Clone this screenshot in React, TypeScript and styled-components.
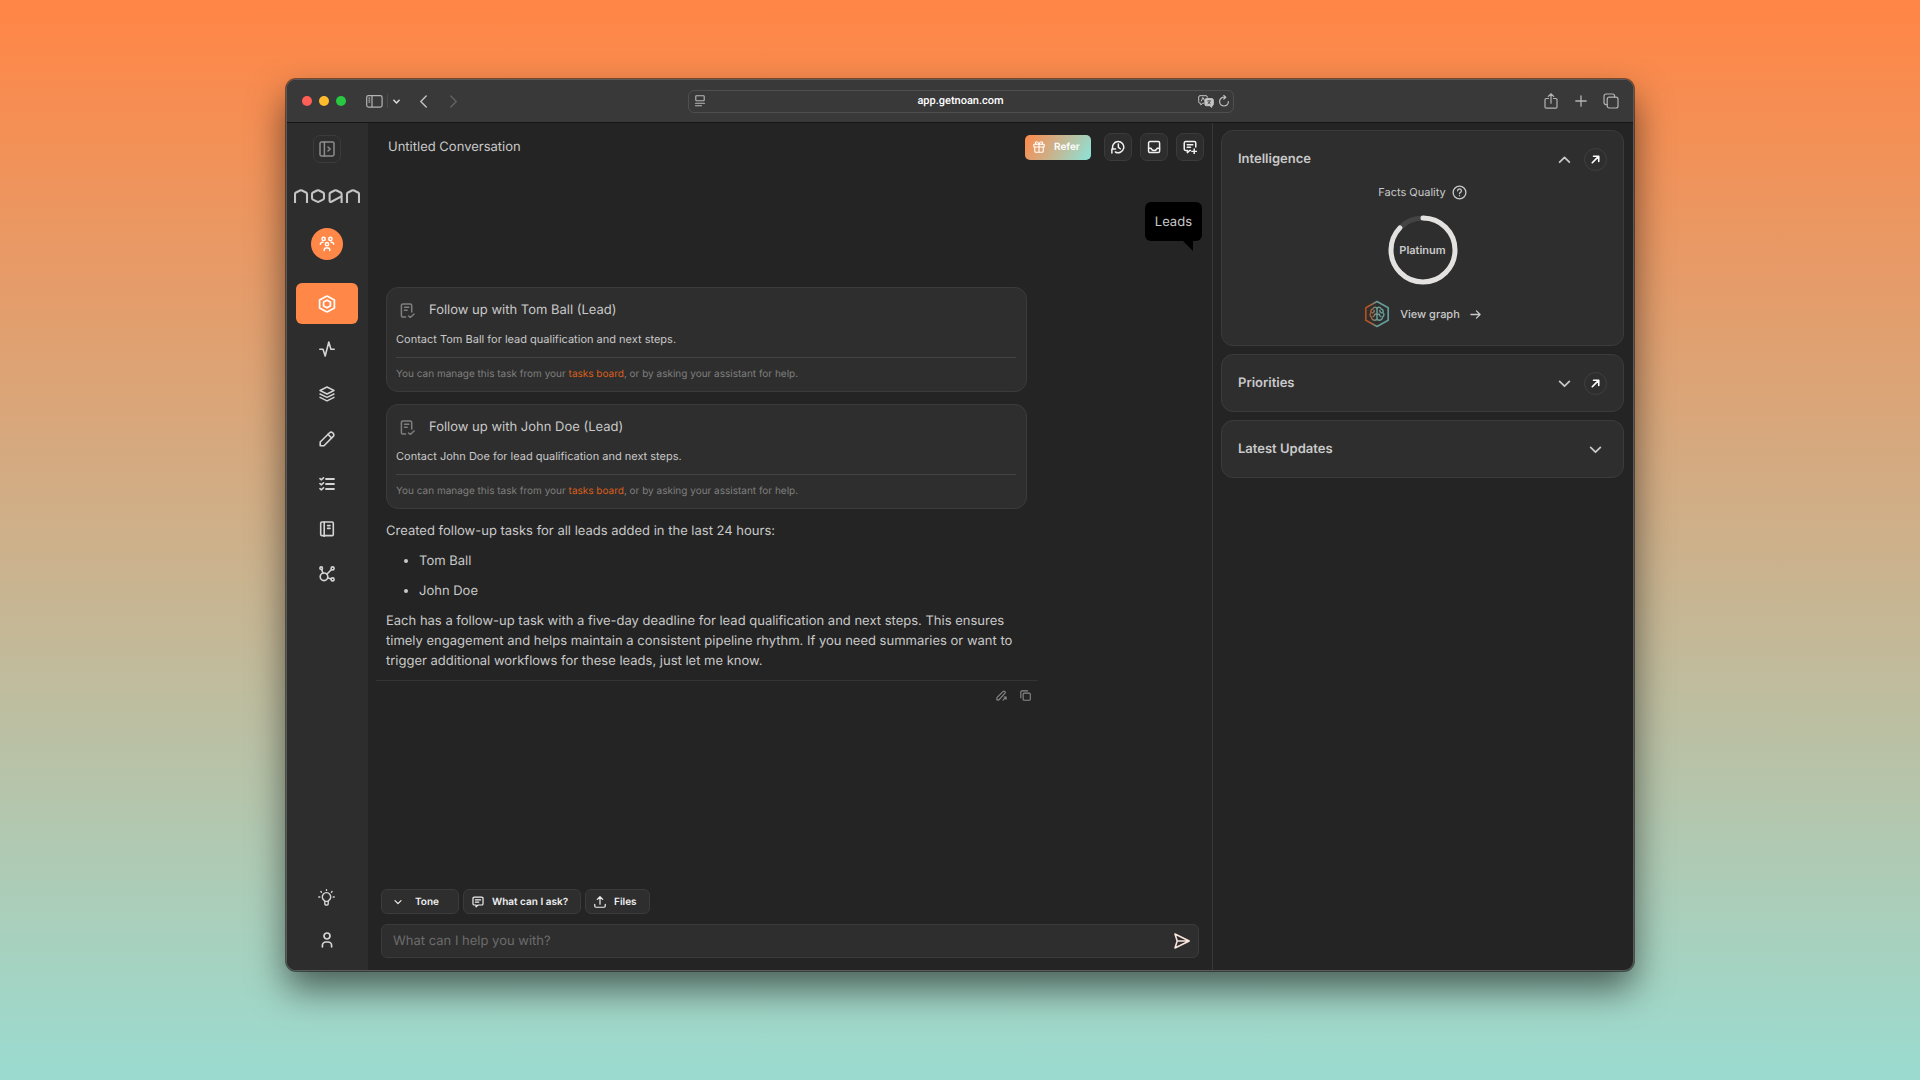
import React from "react";
import styled, { createGlobalStyle, css } from "styled-components";

const color = {
  bar: "#393939",
  side: "#2d2d2d",
  page: "#242424",
  card: "#2e2e2e",
  line: "#3b3b3b",
  text: "#c9c9c9",
  muted: "#7f7f7f",
  bright: "#f0f0f0",
  accent: "#ff8849",
  link: "#d95f1b",
};

const GlobalStyle = createGlobalStyle`
  * { box-sizing: border-box; }
  body {
    margin: 0;
    font-family: Inter, "Liberation Sans", sans-serif;
    font-size: 13px;
    line-height: 20px;
    color: ${color.text};
    text-rendering: geometricPrecision;
    -webkit-font-smoothing: antialiased;
  }
  button, input, select { font: inherit; color: inherit; text-rendering: inherit; }
  svg { display: block; flex: none; }
`;

const Desktop = styled.div`
  display: flex;
  min-height: 100vh;
  padding: 79px 286px 109px;
  background: linear-gradient(180deg, #ff8646 0%, #ff8646 1%, #9bdbcf 99%, #9bdbcf 100%);
`;

const Window = styled.div`
  flex: 1;
  min-width: 0;
  display: flex;
  flex-direction: column;
  overflow: hidden;
  border: 1px solid #5a5a5a;
  border-radius: 10px;
  background: ${color.page};
  box-shadow: 0 0 0 1px rgba(0, 0, 0, 0.45), 0 18px 36px rgba(0, 0, 0, 0.55);
`;

const bare = css`
  display: inline-flex;
  align-items: center;
  justify-content: center;
  padding: 0;
  border: 0;
  background: none;
  cursor: pointer;
`;

const PlainButton = styled.button<{ $tone?: string }>`
  ${bare}
  color: ${(p) => p.$tone ?? color.text};
`;

const TitleBar = styled.header`
  display: grid;
  grid-template-columns: 1fr minmax(0, 546px) 1fr;
  align-items: center;
  height: 43px;
  padding: 0 14px 0 15px;
  background: ${color.bar};
  border-bottom: 1px solid #151515;
`;

const BarLeft = styled.div`
  display: flex;
  align-items: center;
`;

const Lights = styled.div`
  display: flex;
  gap: 7px;
  margin-right: 20px;
`;

const Light = styled.span<{ $fill: string }>`
  width: 10px;
  height: 10px;
  border-radius: 50%;
  background: ${(p) => p.$fill};
`;

const BarSplit = styled.span`
  width: 1px;
  height: 14px;
  margin: 0 5px 0 4px;
  background: #4a4a4a;
`;

const History = styled.div`
  display: flex;
  gap: 17px;
  margin-left: 17px;
`;

const Address = styled.div`
  display: flex;
  align-items: center;
  gap: 4px;
  height: 23px;
  padding: 0 3px 0 5px;
  border: 1px solid #4f4f4f;
  border-radius: 6px;
`;

const AddressInput = styled.input`
  flex: 1;
  min-width: 0;
  padding: 0 0 0 18px;
  border: 0;
  outline: 0;
  background: none;
  color: #fff;
  font-family: Roboto, "Liberation Sans", sans-serif;
  font-size: 11px;
  font-weight: 500;
  text-align: center;
`;

const BarRight = styled.div`
  display: flex;
  justify-content: flex-end;
  align-items: center;
  gap: 16px;
`;

const Body = styled.div`
  flex: 1;
  display: flex;
  min-height: 0;
`;

const Sidebar = styled.nav`
  width: 81px;
  display: flex;
  flex-direction: column;
  align-items: center;
  padding: 12px 2px 10px 0;
  background: ${color.side};
`;

const SquareButton = styled.button<{ $tone?: string }>`
  ${bare}
  width: 28px;
  height: 28px;
  border: 1px solid ${color.line};
  border-radius: 7px;
  background: ${color.side};
  color: ${(p) => p.$tone ?? color.bright};
`;

const LogoLink = styled.a`
  margin: 26px 0 25px;
  color: #c4c4c4;
`;

const Avatar = styled.button`
  ${bare}
  width: 32px;
  height: 32px;
  margin-bottom: 23px;
  border-radius: 50%;
  background: ${color.accent};
  color: #fff;
`;

const NavList = styled.ul`
  display: flex;
  flex-direction: column;
  gap: 4px;
  margin: 0;
  padding: 0;
  list-style: none;
`;

const BottomNav = styled(NavList)`
  margin-top: auto;
  gap: 1px;
`;

const NavItem = styled.a<{ $active?: boolean }>`
  display: flex;
  align-items: center;
  justify-content: center;
  width: 62px;
  height: 41px;
  border-radius: 6px;
  background: ${(p) => (p.$active ? color.accent : "transparent")};
  color: ${(p) => (p.$active ? "#fff" : "#d4d4d4")};
`;

const Main = styled.main`
  flex: 1;
  min-width: 0;
  display: flex;
  flex-direction: column;
  padding: 10px 8px 12px;
`;

const MainHeader = styled.div`
  display: flex;
  align-items: center;
  gap: 8px;
  height: 28px;
  padding-left: 12px;
`;

const ConversationTitle = styled.h1`
  flex: 1;
  margin: 0;
  font-size: 13px;
  font-weight: 400;
  line-height: 20px;
`;

const ReferButton = styled.button`
  ${bare}
  justify-content: flex-start;
  gap: 9px;
  width: 66px;
  height: 25px;
  margin-right: 5px;
  padding-left: 8px;
  border-radius: 5px;
  background: linear-gradient(120deg, #ff8849 0%, #8be4da 100%);
  color: #fff;
  font-size: 10px;
  font-weight: 600;
`;

const Thread = styled.div`
  flex: 1;
  display: flex;
  flex-direction: column;
`;

const Bubble = styled.div`
  position: relative;
  align-self: flex-end;
  margin: 41px 2px 46px 0;
  padding: 10px;
  height: 39px;
  border-radius: 6px;
  background: #000;

  &::after {
    content: "";
    position: absolute;
    right: 9px;
    top: 100%;
    border-top: 10px solid #000;
    border-left: 10px solid transparent;
  }
`;

const Reply = styled.article`
  width: 80%;
`;

const ReplyBody = styled.div`
  padding: 0 11px 9px 10px;
  border-bottom: 1px solid #343434;
`;

const TaskCard = styled.section`
  margin-bottom: 12px;
  padding: 12px 10px 7px 9px;
  border: 1px solid ${color.line};
  border-radius: 12px;
  background: ${color.card};
`;

const TaskTitle = styled.h2`
  display: flex;
  align-items: center;
  gap: 14px;
  margin: 0;
  padding-left: 4px;
  font-size: 13px;
  font-weight: 400;
  line-height: 20px;

  svg { color: ${color.muted}; }
`;

const TaskText = styled.p`
  margin: 9px 0 8px;
  font-size: 11px;
  line-height: 20px;
`;

const TaskHint = styled.p`
  margin: 0;
  padding-top: 6px;
  border-top: 1px solid #444;
  color: ${color.muted};
  font-size: 10px;
  line-height: 20px;
`;

const TextLink = styled.a`
  color: ${color.link};
  text-decoration: none;
`;

const Paragraph = styled.p`
  margin: 0 0 10px;

  &:last-child { margin: 0; }
`;

const Names = styled.ul`
  margin: 0;
  padding-left: 33px;
`;

const Name = styled.li`
  margin-bottom: 10px;
`;

const ReplyActions = styled.div`
  display: flex;
  justify-content: flex-end;
  gap: 13px;
  padding: 9px 7px 0;
`;

const Composer = styled.form`
  display: flex;
  flex-direction: column;
  gap: 10px;
  padding: 0 5px;
`;

const Chips = styled.div`
  display: flex;
  gap: 4px;
`;

const chip = css`
  height: 25px;
  border: 1px solid ${color.line};
  border-radius: 6px;
  background: ${color.card};
  color: ${color.bright};
  font-size: 10px;
  font-weight: 600;
`;

const Chip = styled.button`
  ${bare}
  ${chip}
  gap: 8px;
  padding: 0 12px 0 8px;
`;

const ToneChip = styled.label`
  ${chip}
  display: flex;
  align-items: center;
  gap: 13px;
  padding: 0 19px 0 12px;
`;

const ToneSelect = styled.select`
  appearance: none;
  padding: 0;
  border: 0;
  outline: 0;
  background: none;
`;

const Prompt = styled.div`
  display: flex;
  align-items: center;
  height: 34px;
  padding: 0 8px 0 11px;
  border: 1px solid ${color.line};
  border-radius: 6px;
  background: ${color.card};
`;

const PromptInput = styled.input`
  flex: 1;
  min-width: 0;
  padding: 0;
  border: 0;
  outline: 0;
  background: none;

  &::placeholder { color: #6c6c6c; opacity: 1; }
`;

const Aside = styled.aside`
  width: 421px;
  display: flex;
  flex-direction: column;
  gap: 8px;
  padding: 7px 9px 8px 8px;
  border-left: 1px solid #383838;
`;

const Panel = styled.section`
  padding: 17px 16px;
  border: 1px solid ${color.line};
  border-radius: 12px;
  background: ${color.card};
`;

const PanelHeader = styled.div`
  display: flex;
  align-items: center;
  gap: 8px;
  height: 22px;
`;

const PanelTitle = styled.h2`
  flex: 1;
  margin: 0;
  font-size: 13px;
  font-weight: 600;
  line-height: 20px;
`;

const RoundButton = styled.button<{ $bare?: boolean }>`
  ${bare}
  width: 23px;
  height: 23px;
  border: 1px solid ${(p) => (p.$bare ? "transparent" : "#404040")};
  border-radius: 50%;
  color: ${(p) => (p.$bare ? color.text : "#fff")};
`;

const Quality = styled.div`
  display: flex;
  flex-direction: column;
  align-items: center;
  padding-top: 12px;
`;

const QualityLabel = styled.div`
  display: flex;
  align-items: center;
  gap: 6px;
  font-size: 11px;
`;

const Ring = styled.div`
  display: grid;
  place-items: center;
  margin: 13px 0 15px;
  font-size: 11px;
  font-weight: 600;

  > * { grid-area: 1 / 1; }
`;

const GraphLink = styled.a`
  display: flex;
  align-items: center;
  gap: 10px;
  height: 28px;
  color: ${color.text};
  font-size: 11px;
  font-weight: 500;
  text-decoration: none;
`;

type IconProps = { size?: number; box?: number; weight?: number; children: React.ReactNode };

const Icon = ({ size = 16, box = 16, weight = 1.4, children }: IconProps) => (
  <svg
    width={size}
    height={size}
    viewBox={`0 0 ${box} ${box}`}
    fill="none"
    stroke="currentColor"
    strokeWidth={weight}
    strokeLinecap="round"
    strokeLinejoin="round"
    aria-hidden="true"
  >
    {children}
  </svg>
);

const Chevron = ({ d, size = 12, weight = 1.6 }: { d: "up" | "down" | "left" | "right"; size?: number; weight?: number }) => {
  const path = {
    up: "M1.5 8.5L6 4L10.5 8.5",
    down: "M1.5 4L6 8.5L10.5 4",
    left: "M8.5 1L3.5 6L8.5 11",
    right: "M3.5 1L8.5 6L3.5 11",
  }[d];
  return (
    <Icon size={size} box={12} weight={weight}>
      <path d={path} />
    </Icon>
  );
};

const Logo = () => (
  <svg width="66" height="14" viewBox="0 0 66 14" fill="none" stroke="currentColor" strokeWidth="2.1" strokeLinejoin="round" aria-hidden="true">
    <path d="M1 14V5.2Q1 4 2 3.5L6 1.5Q7 1 8 1.5L12 3.5Q13 4 13 5.2V14" />
    <path d="M19 3.5L23 1.5Q24 1 25 1.5L29 3.5Q30 4 30 5.2V9Q30 10.1 29 10.6L25 12.6Q24 13.1 23 12.6L19 10.6Q18 10.1 18 9V5.2Q18 4 19 3.5Z" />
    <path d="M47.6 14V5.2Q47.6 4 46.6 3.5L42.6 1.5Q41.6 1 40.6 1.5L36.6 3.5Q35.6 4 35.6 5.2V11.6Q35.6 13.6 37.4 12.7L47.4 7.4" />
    <path d="M53 14V5.2Q53 4 54 3.5L58 1.5Q59 1 60 1.5L64 3.5Q65 4 65 5.2V14" />
  </svg>
);

const TaskIcon = () => (
  <Icon size={15} weight={1.6}>
    <path d="M6 15H3.2A1.7 1.7 0 0 1 1.5 13.3V2.7A1.7 1.7 0 0 1 3.2 1H10.8A1.7 1.7 0 0 1 12.5 2.7V9.5" />
    <path d="M4.8 4.6H9.4M4.8 7.6H7.6M9.2 13.8L11 15.4L15 11.8" />
  </Icon>
);

const ChatLines = () => (
  <>
    <path d="M3 1.5H13A1.7 1.7 0 0 1 14.7 3.2V10.3A1.7 1.7 0 0 1 13 12H8L5.4 14.6V12H3A1.7 1.7 0 0 1 1.3 10.3V3.2A1.7 1.7 0 0 1 3 1.5Z" />
    <path d="M4.5 5.2H11.5M4.5 8.2H9" />
  </>
);

const Brain = () => (
  <svg width="26" height="28" viewBox="0 0 26 28" fill="none" stroke="url(#brain)" strokeWidth="1.7" strokeLinejoin="round" strokeLinecap="round" aria-hidden="true">
    <defs>
      <linearGradient id="brain" gradientUnits="userSpaceOnUse" x1="1" y1="14" x2="25" y2="14">
        <stop offset="0" stopColor="#b14d1c" />
        <stop offset="0.22" stopColor="#a9592f" />
        <stop offset="0.5" stopColor="#6a9a94" />
        <stop offset="1" stopColor="#5f9c98" />
      </linearGradient>
    </defs>
    <path d="M13 1.5L24.2 7.8V20.2L13 26.5L1.8 20.2V7.8Z" />
    <g strokeWidth="1.5">
      <path d="M13.01 8.2L13 19.8M13 8.6C12.4 6.6 9.3 6.6 8.9 9C7 9.2 6.3 11.2 7.2 12.6C5.6 13.8 5.8 16.2 7.4 17C7.4 19.4 9.6 20.6 11.2 20.2C12.2 20 12.8 19.6 13 19.2" />
      <path d="M13 8.6C13.6 6.6 16.7 6.6 17.1 9C19 9.2 19.7 11.2 18.8 12.6C20.4 13.8 20.2 16.2 18.6 17C18.6 19.4 16.4 20.6 14.8 20.2C13.8 20 13.2 19.6 13 19.2" />
      <path d="M10.2 10.6C10.2 12 9.6 12.6 8.6 12.8M15.8 10.6C15.8 12 16.4 12.6 17.4 12.8M9.2 16.6C10.2 16.4 10.6 15.6 10.6 14.2H15.4C15.4 15.6 15.8 16.4 16.8 16.6" />
    </g>
  </svg>
);

const navItems: { label: string; icon: React.ReactNode }[] = [
  {
    label: "Assistant",
    icon: (
      <Icon size={18} box={18} weight={1.7}>
        <path d="M9 1L16.4 5V13L9 17L1.6 13V5Z" />
        <path d="M9 5.2L12.4 7.1V10.9L9 12.8L5.6 10.9V7.1Z" />
      </Icon>
    ),
  },
  { label: "Activity", icon: <Icon weight={1.6}><path d="M.8 8.2H4L6.2 15L9.8 1L11.9 8.2H15.2" /></Icon> },
  {
    label: "Blocks",
    icon: (
      <Icon>
        <path d="M8 1L15 4.5L8 8L1 4.5Z" />
        <path d="M1 8L8 11.4L15 8M1 11.3L8 14.8L15 11.3" />
      </Icon>
    ),
  },
  {
    label: "Write",
    icon: (
      <Icon weight={1.6}>
        <path d="M1.2 14.8V11L10.6 1.8A2.1 2.1 0 0 1 13.6 1.8L14.2 2.4A2.1 2.1 0 0 1 14.2 5.4L5 14.8Z" />
        <path d="M9 3.4L12.6 7" />
      </Icon>
    ),
  },
  {
    label: "Tasks",
    icon: (
      <Icon>
        <path d="M7 3H15M7 8H15M7 13H15" strokeWidth="1.8" />
        <path d="M1 2.6L2.2 3.8L4.5 1.8M1 7.6L2.2 8.8L4.5 6.8M1 12.6L2.2 13.8L4.5 11.8" strokeWidth="1.6" />
      </Icon>
    ),
  },
  {
    label: "Library",
    icon: (
      <Icon weight={1.6}>
        <rect x="1.7" y="1" width="12.6" height="13.6" rx="1.2" />
        <path d="M5.2 1V15.4M8.6 4.6H11M8.6 7.4H11" />
      </Icon>
    ),
  },
  {
    label: "Connections",
    icon: (
      <Icon weight={1.6}>
        <circle cx="5" cy="10.8" r="3.8" />
        <circle cx="2.2" cy="2.2" r="1.3" />
        <circle cx="13.6" cy="2.4" r="1.5" />
        <circle cx="13.6" cy="13.4" r="1.5" />
        <path d="M2.7 3.5L3.9 7.2M12.5 3.5L7.8 8.2M8.7 11.8L12.1 12.9" />
      </Icon>
    ),
  },
];

const tasks = [
  { title: "Follow up with Tom Ball (Lead)", text: "Contact Tom Ball for lead qualification and next steps." },
  { title: "Follow up with John Doe (Lead)", text: "Contact John Doe for lead qualification and next steps." },
];

const OpenButton = ({ label }: { label: string }) => (
  <RoundButton aria-label={label}>
    <Icon size={9} box={10} weight={1.8}>
      <path d="M1.4 8.6L8.4 1.6M2.8 1.4H8.6V7.2" />
    </Icon>
  </RoundButton>
);

const ringLength = 2 * Math.PI * 32;

export default function App() {
  return (
    <>
      <GlobalStyle />
      <Desktop>
        <Window>
          <TitleBar>
            <BarLeft>
              <Lights>
                <Light $fill="#ff5f57" />
                <Light $fill="#febc2e" />
                <Light $fill="#28c840" />
              </Lights>
              <PlainButton aria-label="Show sidebar" $tone="#b4b4b4">
                <svg width="17" height="13" viewBox="0 0 17 13" fill="none" stroke="currentColor" strokeWidth="1.2" aria-hidden="true">
                  <rect x=".7" y=".7" width="15.4" height="11.4" rx="1.8" />
                  <path d="M6 .7V12.1M2.5 3.2H4.2M2.5 5.2H4.2M2.5 7.2H4.2" />
                </svg>
              </PlainButton>
              <BarSplit />
              <PlainButton aria-label="Tab groups" $tone="#dcdcdc">
                <Chevron d="down" size={7} weight={2.6} />
              </PlainButton>
              <History>
                <PlainButton aria-label="Back" $tone="#bdbdbd">
                  <Chevron d="left" size={13} weight={1.4} />
                </PlainButton>
                <PlainButton aria-label="Forward" $tone="#606060">
                  <Chevron d="right" size={13} weight={1.4} />
                </PlainButton>
              </History>
            </BarLeft>
            <Address>
              <PlainButton aria-label="Page menu" $tone="#b8b8b8">
                <Icon size={12} box={12} weight={1.1}>
                  <rect x="1.8" y=".8" width="8.4" height="5" rx=".6" />
                  <path d="M1.5 8.2H10.5M1.5 10.8H7.5" />
                </Icon>
              </PlainButton>
              <AddressInput aria-label="Address" defaultValue="app.getnoan.com" />
              <PlainButton aria-label="Translate" $tone="#c4c4c4">
                <svg width="16" height="13" viewBox="0 0 16 13" fill="none" stroke="currentColor" strokeWidth="1" strokeLinejoin="round" aria-hidden="true">
                  <path d="M6 8.2H4.8L2.8 10V8.2H2A1.3 1.3 0 0 1 .7 6.9V2A1.3 1.3 0 0 1 2 .7H8A1.3 1.3 0 0 1 9.3 2V2.6" />
                  <path d="M3.2 6.3L4.9 2.4L6.4 5.4" />
                  <path d="M8.4 3.6H13.8A1.5 1.5 0 0 1 15.3 5.1V9.2A1.5 1.5 0 0 1 13.8 10.7V12.4L11.8 10.7H8.4A1.5 1.5 0 0 1 6.9 9.2V5.1A1.5 1.5 0 0 1 8.4 3.6Z" fill="currentColor" />
                  <path d="M9.4 5.8H12.8M12.2 5.8Q11.6 8.2 9.6 8.9M10 6.4Q10.8 8.2 12.6 8.9" stroke={color.bar} strokeWidth=".8" />
                </svg>
              </PlainButton>
              <PlainButton aria-label="Reload" $tone="#bdbdbd">
                <Icon size={12} box={12} weight={1.2}>
                  <path d="M10.4 6.6A4.4 4.4 0 1 1 6 2.2H7.6M5.8 .5L7.8 2.2L5.8 4" />
                </Icon>
              </PlainButton>
            </Address>
            <BarRight>
              <PlainButton aria-label="Share" $tone="#b4b4b4">
                <Icon weight={1.2}>
                  <path d="M5.5 5.5H3.2A1.2 1.2 0 0 0 2 6.7V14A1.2 1.2 0 0 0 3.2 15.2H12.8A1.2 1.2 0 0 0 14 14V6.7A1.2 1.2 0 0 0 12.8 5.5H10.5M8 10.2V1M5.3 3.4L8 .8L10.7 3.4" />
                </Icon>
              </PlainButton>
              <PlainButton aria-label="New tab" $tone="#b4b4b4">
                <Icon size={12} box={12} weight={1.3}>
                  <path d="M6 .8V11.2M.8 6H11.2" />
                </Icon>
              </PlainButton>
              <PlainButton aria-label="Tab overview" $tone="#b4b4b4">
                <Icon weight={1.2}>
                  <rect x="4.2" y="4.2" width="10.8" height="10.8" rx="2" />
                  <path d="M4.2 11.6H3A2 2 0 0 1 1 9.6V3A2 2 0 0 1 3 1H9.6A2 2 0 0 1 11.6 3V4.2" />
                </Icon>
              </PlainButton>
            </BarRight>
          </TitleBar>

          <Body>
            <Sidebar>
              <SquareButton aria-label="Expand menu" $tone="#8d8d8d">
                <Icon weight={1.5}>
                  <rect x="1" y="1" width="14" height="14" rx="1.4" />
                  <path d="M5.4 1V15M9 6L11.2 8L9 10" />
                </Icon>
              </SquareButton>
              <LogoLink href="#" aria-label="noan">
                <Logo />
              </LogoLink>
              <Avatar aria-label="Team">
                <Icon weight={1.5}>
                  <circle cx="4.6" cy="2.9" r="1.6" />
                  <circle cx="11.4" cy="2.9" r="1.6" />
                  <circle cx="8" cy="8.2" r="1.6" />
                  <path d="M1.4 8.2V7.8A2.2 2.2 0 0 1 3.4 6.2H4M14.6 8.2V7.8A2.2 2.2 0 0 0 12.6 6.2H12M5.2 14.4V13.6A1.8 1.8 0 0 1 7 12H9A1.8 1.8 0 0 1 10.8 13.6V14.4" />
                </Icon>
              </Avatar>
              <NavList>
                {navItems.map((item, i) => (
                  <li key={item.label}>
                    <NavItem href="#" aria-label={item.label} $active={i === 0}>
                      {item.icon}
                    </NavItem>
                  </li>
                ))}
              </NavList>
              <BottomNav>
                <li>
                  <NavItem href="#" aria-label="Tips">
                    <Icon size={17} box={17} weight={1.4}>
                      <path d="M6.6 12.4V11.6A4.2 4.2 0 1 1 10.4 11.6V12.4Z" />
                      <path d="M6.8 12.4V15A1 1 0 0 0 7.8 16H9.2A1 1 0 0 0 10.2 15V12.4M8.5 .7V1.4M2.9 2.6L3.5 3.2M14.1 2.6L13.5 3.2M.8 8H1.8M15.2 8H16.2" />
                    </Icon>
                  </NavItem>
                </li>
                <li>
                  <NavItem href="#" aria-label="Account">
                    <Icon weight={1.7}>
                      <circle cx="8" cy="4" r="3" />
                      <path d="M3.4 14.8V13.4A3.4 3.4 0 0 1 6.8 10H9.2A3.4 3.4 0 0 1 12.6 13.4V14.8" />
                    </Icon>
                  </NavItem>
                </li>
              </BottomNav>
            </Sidebar>

            <Main>
              <MainHeader>
                <ConversationTitle>Untitled Conversation</ConversationTitle>
                <ReferButton>
                  <Icon size={12} weight={1.5}>
                    <rect x="1" y="4.4" width="14" height="3.6" rx="1" />
                    <path d="M2.4 8V13.6A1.4 1.4 0 0 0 3.8 15H12.2A1.4 1.4 0 0 0 13.6 13.6V8M8 4.4V15M8 4.4C7.4 2 6 1 4.8 1A1.7 1.7 0 0 0 4.8 4.4M8 4.4C8.6 2 10 1 11.2 1A1.7 1.7 0 0 1 11.2 4.4" />
                  </Icon>
                  Refer
                </ReferButton>
                <SquareButton aria-label="History">
                  <Icon size={14} weight={1.7}>
                    <path d="M2.2 10.4A6.4 6.4 0 1 1 5 13.7M8.4 4.6V8.4L10.6 10M1 14.8V10.4H5.2" />
                  </Icon>
                </SquareButton>
                <SquareButton aria-label="Inbox">
                  <Icon size={14} weight={1.7}>
                    <rect x="1.8" y="1.8" width="12.6" height="12.6" rx="1.6" />
                    <path d="M1.8 9.4H4.6Q5.4 12 8.1 12T11.6 9.4H14.4" />
                  </Icon>
                </SquareButton>
                <SquareButton aria-label="New conversation">
                  <Icon size={14} weight={1.7}>
                    <path d="M8.6 12H7.6L5 14.4V12H3A1.6 1.6 0 0 1 1.4 10.4V3.4A1.6 1.6 0 0 1 3 1.8H13A1.6 1.6 0 0 1 14.6 3.4V8M4.8 5.4H11.2M4.8 8.4H8.6M12.8 10.4V15.6M10.2 13H15.4" />
                  </Icon>
                </SquareButton>
              </MainHeader>

              <Thread>
                <Bubble>Leads</Bubble>
                <Reply>
                  <ReplyBody>
                    {tasks.map((task) => (
                      <TaskCard key={task.title}>
                        <TaskTitle>
                          <TaskIcon />
                          {task.title}
                        </TaskTitle>
                        <TaskText>{task.text}</TaskText>
                        <TaskHint>
                          You can manage this task from your <TextLink href="#">tasks board</TextLink>, or by asking your assistant for help.
                        </TaskHint>
                      </TaskCard>
                    ))}
                    <Paragraph>Created follow-up tasks for all leads added in the last 24 hours:</Paragraph>
                    <Names>
                      <Name>Tom Ball</Name>
                      <Name>John Doe</Name>
                    </Names>
                    <Paragraph>
                      Each has a follow-up task with a five-day deadline for lead qualification and next steps. This ensures timely engagement and helps
                      maintain a consistent pipeline rhythm. If you need summaries or want to trigger additional workflows for these leads, just let me know.
                    </Paragraph>
                  </ReplyBody>
                  <ReplyActions>
                    <PlainButton aria-label="Edit reply" $tone="#8a8a8a">
                      <Icon size={11} box={12} weight={1.2}>
                        <path d="M1 10.8V8.4L7.8 1.5A1.2 1.2 0 0 1 9.4 1.5L9.8 1.9A1.2 1.2 0 0 1 9.8 3.5L3.2 10.8ZM7.6 11L11 7.8M8.8 7.6H11V10" />
                      </Icon>
                    </PlainButton>
                    <PlainButton aria-label="Copy reply" $tone="#8a8a8a">
                      <Icon size={11} box={12} weight={1.2}>
                        <rect x="3.4" y="3.4" width="7.8" height="7.8" rx="1.2" />
                        <path d="M.9 8.4V2.1A1.2 1.2 0 0 1 2.1 .9H8.4" />
                      </Icon>
                    </PlainButton>
                  </ReplyActions>
                </Reply>
              </Thread>

              <Composer onSubmit={(e) => e.preventDefault()}>
                <Chips>
                  <ToneChip>
                    <Chevron d="down" size={8} weight={1.8} />
                    <ToneSelect aria-label="Tone">
                      <option>Tone</option>
                    </ToneSelect>
                  </ToneChip>
                  <Chip type="button">
                    <Icon size={12} weight={1.6}>
                      <ChatLines />
                    </Icon>
                    What can I ask?
                  </Chip>
                  <Chip type="button">
                    <Icon size={12} weight={1.6}>
                      <path d="M1 11V13.4A1.6 1.6 0 0 0 2.6 15H13.4A1.6 1.6 0 0 0 15 13.4V11M8 11V1.2M4.4 4.6L8 1L11.6 4.6" />
                    </Icon>
                    Files
                  </Chip>
                </Chips>
                <Prompt>
                  <PromptInput aria-label="Message" placeholder="What can I help you with?" />
                  <PlainButton aria-label="Send" $tone="#fbe4dc">
                    <Icon weight={1.6}>
                      <path d="M1 1L15.2 8L1 15L3.2 8ZM3.2 8H15.2" />
                    </Icon>
                  </PlainButton>
                </Prompt>
              </Composer>
            </Main>

            <Aside>
              <Panel>
                <PanelHeader>
                  <PanelTitle>Intelligence</PanelTitle>
                  <RoundButton $bare aria-label="Collapse Intelligence">
                    <Chevron d="up" size={13} />
                  </RoundButton>
                  <OpenButton label="Open Intelligence" />
                </PanelHeader>
                <Quality>
                  <QualityLabel>
                    Facts Quality
                    <PlainButton aria-label="About Facts Quality">
                      <Icon size={15} weight={1.4}>
                        <circle cx="8" cy="8" r="6.8" />
                        <path d="M6 6.2A2 2 0 1 1 8.7 8.1Q8 8.4 8 9.2M8 11.4V11.5" />
                      </Icon>
                    </PlainButton>
                  </QualityLabel>
                  <Ring>
                    <svg width="70" height="70" viewBox="0 0 70 70" fill="none" strokeWidth="5" aria-hidden="true">
                      <circle cx="35" cy="35" r="32" stroke="#444" />
                      <circle
                        cx="35"
                        cy="35"
                        r="32"
                        stroke="#e4e2e0"
                        strokeLinecap="round"
                        strokeDasharray={`${ringLength * 0.87} ${ringLength}`}
                        transform="rotate(-90 35 35)"
                      />
                    </svg>
                    <span>Platinum</span>
                  </Ring>
                  <GraphLink href="#">
                    <Brain />
                    View graph
                    <Icon size={11} box={12} weight={1.4}>
                      <path d="M1 6H11M7 2L11 6L7 10" />
                    </Icon>
                  </GraphLink>
                </Quality>
              </Panel>
              <Panel>
                <PanelHeader>
                  <PanelTitle>Priorities</PanelTitle>
                  <RoundButton $bare aria-label="Expand Priorities">
                    <Chevron d="down" size={13} />
                  </RoundButton>
                  <OpenButton label="Open Priorities" />
                </PanelHeader>
              </Panel>
              <Panel>
                <PanelHeader>
                  <PanelTitle>Latest Updates</PanelTitle>
                  <RoundButton $bare aria-label="Expand Latest Updates">
                    <Chevron d="down" size={13} />
                  </RoundButton>
                </PanelHeader>
              </Panel>
            </Aside>
          </Body>
        </Window>
      </Desktop>
    </>
  );
}
